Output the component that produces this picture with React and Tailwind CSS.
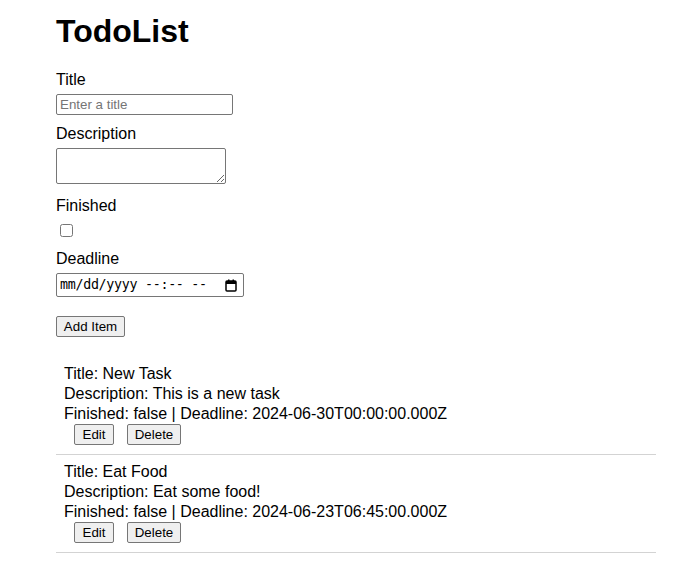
import React, { useState } from 'react'

const todos = [
    { title: 'New Task', description: 'This is a new task', finished: false, deadline: '2024-06-30T00:00:00.000Z' },
    { title: 'Eat Food', description: 'Eat some food!', finished: false, deadline: '2024-06-23T06:45:00.000Z' },
]

const btn = 'bg-[#efefef] border border-[#767676] rounded-[2px] h-[21px] text-[13.33px] leading-[15px] text-black text-center'

const CalendarIcon = () => (
    <svg width="12" height="13" viewBox="0 0 12 13" className="shrink-0">
        <rect x="1" y="2" width="10" height="10" rx="1" fill="none" stroke="#000" strokeWidth="1.5" />
        <rect x="1" y="2" width="10" height="3" fill="#000" />
        <rect x="3" y="0.5" width="1.5" height="2" fill="#000" />
        <rect x="7.5" y="0.5" width="1.5" height="2" fill="#000" />
    </svg>
)

export default function App() {
    const [title, setTitle] = useState('')

    return (
        <div className="min-h-[576px] bg-white text-black font-['Liberation_Sans',Arial,sans-serif]">
            <div className="w-[656px] pl-[56px] pt-[13px]">
                <h1 className="text-[32px] font-bold leading-[37px]">TodoList</h1>

                <form className="flex flex-col items-start mt-[21px]" onSubmit={(e) => e.preventDefault()}>
                    <label className="text-[16px] leading-[18px]">Title</label>
                    <input
                        value={title}
                        onChange={(e) => setTitle(e.target.value)}
                        placeholder="Enter a title"
                        className="mt-[5px] w-[177px] h-[21px] border border-[#767676] rounded-[2px] px-[3px] text-[13.33px] placeholder:text-[#757575]"
                    />

                    <label className="mt-[10px] text-[16px] leading-[18px]">Description</label>
                    <textarea className="mt-[5px] w-[170px] h-[36px] border border-[#767676] rounded-[2px] px-[2px] text-[13.33px] resize" />

                    <label className="mt-[13px] text-[16px] leading-[18px]">Finished</label>
                    <input type="checkbox" className="mt-[9px] ml-[4px] w-[13px] h-[13px]" />

                    <label className="mt-[13px] text-[16px] leading-[18px]">Deadline</label>
                    <div className="mt-[5px] w-[188px] h-[24px] border border-[#767676] rounded-[2px] pl-[3px] pr-[6px] flex items-center justify-between text-[13.33px] font-['DejaVu_Sans_Mono','Liberation_Mono',monospace]">
                        <span className="whitespace-pre tracking-[-0.3px]">mm/dd/yyyy --:-- --</span>
                        <CalendarIcon />
                    </div>

                    <button type="submit" className={`${btn} w-[69px] mt-[19px]`}>Add Item</button>
                </form>

                <ul className="mt-[20px]">
                    {todos.map((todo, i) => (
                        <li key={i} className="pl-[8px] pt-[7px] pb-[9px] border-b border-[#d3d3d3] text-[16px] leading-[20px]">
                            <div>Title: {todo.title}</div>
                            <div>Description: {todo.description}</div>
                            <div>Finished: {String(todo.finished)} | Deadline: {todo.deadline}</div>
                            <div className="flex gap-[13px] pl-[10px]">
                                <button className={`${btn} w-[40px]`}>Edit</button>
                                <button className={`${btn} w-[54px]`}>Delete</button>
                            </div>
                        </li>
                    ))}
                </ul>
            </div>
        </div>
    )
}
